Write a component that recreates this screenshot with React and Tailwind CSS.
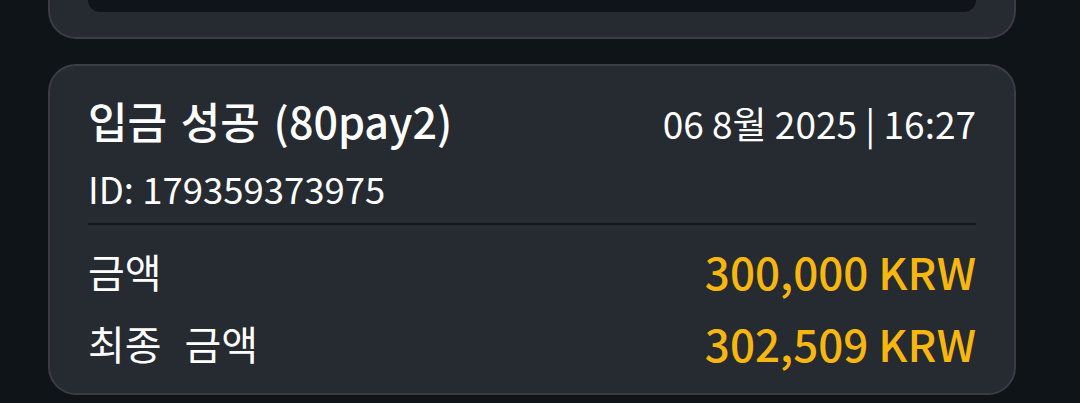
import React from "react";

const font = { fontFamily: '"Noto Sans CJK KR", "Noto Sans", sans-serif' };

function TopCard() {
	return (
		<div className="ml-[48px] mr-[64px] h-[39px] rounded-b-[28px] border-x-2 border-b-2 border-[#3a3d43] bg-[#262a31]">
			<div className="mx-[38px] h-[12px] rounded-b-[20px] bg-[#10141a]" />
		</div>
	);
}

function Row({ label, amount }) {
	return (
		<div className="flex h-[72px] items-center justify-between">
			<div className="text-[40px] text-white [word-spacing:14px]">{label}</div>
			<div className="text-[44px] font-medium text-[#f7b70f]">{amount}</div>
		</div>
	);
}

function TxCard() {
	return (
		<div className="ml-[48px] mr-[64px] mt-[25px] rounded-[28px] border-2 border-[#3a3d43] bg-[#262a31] px-[38px] pb-[14px] pt-[26px]">
			<div className="flex items-baseline justify-between leading-[56px]">
				<div className="text-[43px] font-medium text-white [word-spacing:4px]">입금 성공 (80pay2)</div>
				<div className="text-[37px] text-white">06 8월 2025 | 16:27</div>
			</div>
			<div className="mt-[14px] text-[36.5px] leading-[48px] text-white">ID: 179359373975</div>
			<div className="mt-[10px] h-[2px] bg-[#13171c]" />
			<div className="pt-[10px]">
				<Row label="금액" amount="300,000 KRW" />
				<Row label="최종 금액" amount="302,509 KRW" />
			</div>
		</div>
	);
}

export default function App() {
	return (
		<div className="h-[403px] w-[1080px] overflow-hidden bg-[#0f1419]" style={font}>
			<TopCard />
			<TxCard />
		</div>
	);
}
